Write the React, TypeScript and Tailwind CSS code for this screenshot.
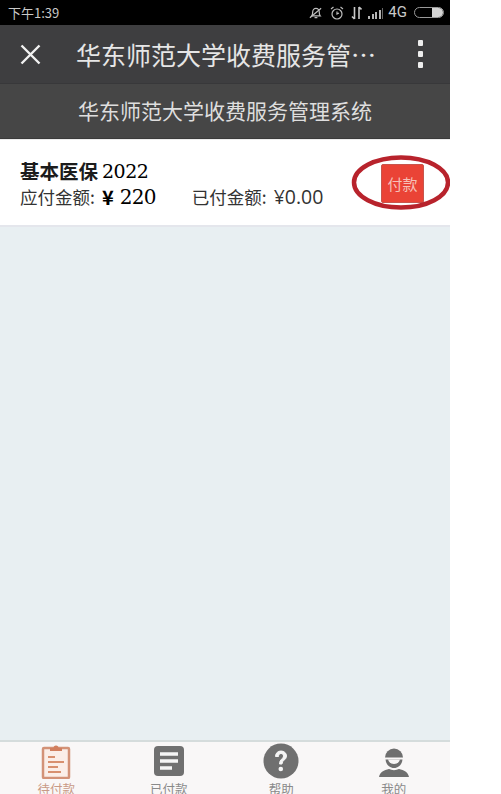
import React from 'react'

const cjk = "font-['Noto_Sans_CJK_SC','Noto_Sans',sans-serif]"
const serif = "font-['DejaVu_Serif','Liberation_Serif',serif]"

const StatusBar = () => (
  <div className="h-[25px] bg-black flex items-center justify-between pl-2 pr-[6px] text-[#c9c9c9]">
    <span className={`text-[13px] ${cjk}`}>下午1:39</span>
    <div className="flex items-center">
      {/* muted bell */}
      <svg width="15" height="14" viewBox="0 0 16 14" fill="none" stroke="#bdbdbd" strokeWidth="1.300">
        <path d="M4 10c1-1 1-2 1-4s1.500-4 3.500-4 3.500 2 3.500 4 0 3 1 4z" />
        <path d="M7 12h3M2 12 14 2" />
      </svg>
      {/* alarm */}
      <svg className="ml-[7px]" width="14" height="14" viewBox="0 0 14 14" fill="none" stroke="#bdbdbd" strokeWidth="1.200">
        <circle cx="7" cy="8" r="5" />
        <path d="M7 5.500V8l2-1M1 3l2.500-2M13 3l-2.500-2" />
      </svg>
      {/* data arrows */}
      <svg className="ml-[7px]" width="11" height="14" viewBox="0 0 11 14" fill="none" stroke="#c9c9c9" strokeWidth="1.600">
        <path d="M3.500 1v12M1 10.500 3.500 13M8 13V1M8 1l2.500 2.500" />
      </svg>
      {/* signal */}
      <div className="ml-[6px] flex items-end gap-[1.500px] h-[12px]">
        <div className="w-[2px] h-[3px] bg-[#b5b5b5]" />
        <div className="w-[2px] h-[5px] bg-[#b5b5b5]" />
        <div className="w-[2px] h-[7px] bg-[#b5b5b5]" />
        <div className="w-[2px] h-[9px] bg-[#b5b5b5]" />
        <div className="w-[1px] h-[11px] bg-[#666666]" />
      </div>
      <span className="ml-[5px] text-[15px] leading-none font-['Roboto',sans-serif]">4G</span>
      {/* battery */}
      <div className="ml-[7px] w-[30px] h-[11px] rounded-full border border-[#9a9a9a] flex justify-end">
        <div className="w-[11px] h-full bg-[#d4d4d4] rounded-r-full" />
      </div>
    </div>
  </div>
)

const Header = () => (
  <div className="h-[59px] bg-[#3e3e40] flex items-center border-b border-[#38383a]">
    <svg className="ml-[20px] shrink-0" width="21" height="21" viewBox="0 0 21 21" stroke="#f2f2f2" strokeWidth="2.400">
      <path d="M1.500 1.500 19.500 19.500M19.500 1.500 1.500 19.500" />
    </svg>
    <span className={`ml-[35px] text-[25px] leading-none whitespace-nowrap text-[#e6e6e6] ${cjk}`}>
      华东师范大学收费服务管…
    </span>
    <div className="ml-auto mr-[27px] flex flex-col gap-[5px]">
      <div className="w-[5px] h-[6px] bg-[#eeeeee] rounded-[1px]" />
      <div className="w-[5px] h-[6px] bg-[#eeeeee] rounded-[1px]" />
      <div className="w-[5px] h-[6px] bg-[#eeeeee] rounded-[1px]" />
    </div>
  </div>
)

const PaymentCard = () => (
  <div className="relative h-[87px] bg-white border-b-2 border-[#e4e6ec] pl-5 pt-[18px]">
    <div className="flex items-center h-[26px]">
      <span className={`text-[19.500px] font-bold text-[#1c1c1c] leading-none ${cjk}`}>基本医保</span>
      <span className={`ml-[4px] text-[19px] text-black leading-none tracking-[-0.500px] ${serif}`}>2022</span>
    </div>
    <div className="flex items-center h-[25px]">
      <span className={`text-[17.500px] text-[#333333] leading-none ${cjk}`}>应付金额:</span>
      <span className={`ml-[7px] text-[20px] font-bold text-black leading-none ${cjk}`}>¥</span>
      <span className={`ml-[6px] text-[20px] text-black leading-none tracking-[-0.700px] ${serif}`}>220</span>
      <span className={`ml-[36px] text-[17.500px] text-[#333333] leading-none ${cjk}`}>已付金额:</span>
      <span className="ml-[7px] text-[19.500px] text-[#333333] leading-none font-['Open_Sans',sans-serif]">¥0.00</span>
    </div>
    <div className="absolute left-[381px] top-[24px] w-[43px] h-[39px] bg-[#ea4336] border border-[#c8554c] rounded-[2px] flex items-center justify-center">
      <span className={`text-[15px] text-[#f6c0b8] leading-none ${cjk}`}>付款</span>
    </div>
    {/* hand drawn ring from the screenshot */}
    <svg className="absolute left-[350px] top-[13px]" width="100" height="60" viewBox="0 0 100 60" fill="none">
      <ellipse cx="51" cy="29.500" rx="47" ry="25" stroke="#b8232c" strokeWidth="4.500" />
    </svg>
  </div>
)

const tabs = [
  { label: '待付款', color: 'text-[#c99a86]' },
  { label: '已付款', color: 'text-[#8a8a8a]' },
  { label: '帮助', color: 'text-[#8a8a8a]' },
  { label: '我的', color: 'text-[#8a8a8a]' },
]

const TabIcon = ({ index }: { index: number }) => {
  if (index === 0) {
    return (
      <svg width="30" height="36" viewBox="0 0 30 36" fill="none">
        <rect x="2" y="5" width="26" height="30" rx="1" stroke="#d39277" strokeWidth="2.500" fill="#fbeee8" />
        <path d="M9 8V5h3.500a2.500 2.500 0 0 1 5 0H21v3z" fill="#d27f5e" />
        <path d="M7 14h7M7 19h16M7 24h10M7 29h13" stroke="#d8906f" strokeWidth="2" />
      </svg>
    )
  }
  if (index === 1) {
    return (
      <svg width="32" height="32" viewBox="0 0 32 32">
        <rect x="1" y="1" width="30" height="30" rx="4" fill="#707070" />
        <path d="M7 9h18M7 16h18M7 23h12" stroke="#f5f5f5" strokeWidth="3.500" />
      </svg>
    )
  }
  if (index === 2) {
    return (
      <svg width="36" height="36" viewBox="0 0 36 36">
        <circle cx="18" cy="18" r="17.500" fill="#707070" />
        <path d="M12.500 13.500c0-3.500 2.500-5.500 5.500-5.500s5.500 2 5.500 5c0 4-4.500 4-4.500 8h-2.500c0-5 4-5 4-8 0-1.500-1-2.500-2.500-2.500s-2.500 1-2.500 3z" fill="#f5f5f5" stroke="#f5f5f5" strokeWidth="1" />
        <circle cx="17.800" cy="26" r="2.300" fill="#f5f5f5" />
      </svg>
    )
  }
  return (
    <svg width="32" height="34" viewBox="0 0 32 34">
      <path d="M7 13.500a9 9 0 0 1 18 0z" fill="#6f6f6f" />
      <path d="M7.500 15.500h17c-.5 5-4 8.500-8.500 8.500s-8-3.500-8.500-8.500z" fill="#6f6f6f" />
      <path d="M10 15.500h12c-1 3-3 4.500-6 4.500s-5-1.500-6-4.500z" fill="#f8f6f6" />
      <path d="M1 33c1-5 5-7 10-8 3 1.500 7 1.500 10 0 5 1 9 3 10 8z" fill="#6f6f6f" />
    </svg>
  )
}

const TabBar = () => (
  <div className="h-[54px] bg-[#f9f7f7] border-t-2 border-[#d5dcdc] grid grid-cols-4 overflow-hidden">
    {tabs.map((tab, i) => (
      <div key={tab.label} className="flex flex-col items-center">
        <div className="h-[38px] flex items-center justify-center">
          <TabIcon index={i} />
        </div>
        <span className={`text-[12.500px] leading-none mt-[3px] ${tab.color} ${cjk}`}>{tab.label}</span>
      </div>
    ))}
  </div>
)

const App = () => {
  return (
    <div className="w-[501px] h-[794px] bg-white overflow-hidden">
      <div className="w-[450px] h-full flex flex-col">
        <StatusBar />
        <Header />
        <div className={`h-[55px] bg-[#464646] flex items-center justify-center border-b border-[#3a3a3a] text-[21px] text-[#dedede] ${cjk}`}>
          华东师范大学收费服务管理系统
        </div>
        <div className="h-[1px] bg-[#ececec]" />
        <PaymentCard />
        <div className="flex-1 bg-[#e8eff2]" />
        <TabBar />
      </div>
    </div>
  )
}

export default App
